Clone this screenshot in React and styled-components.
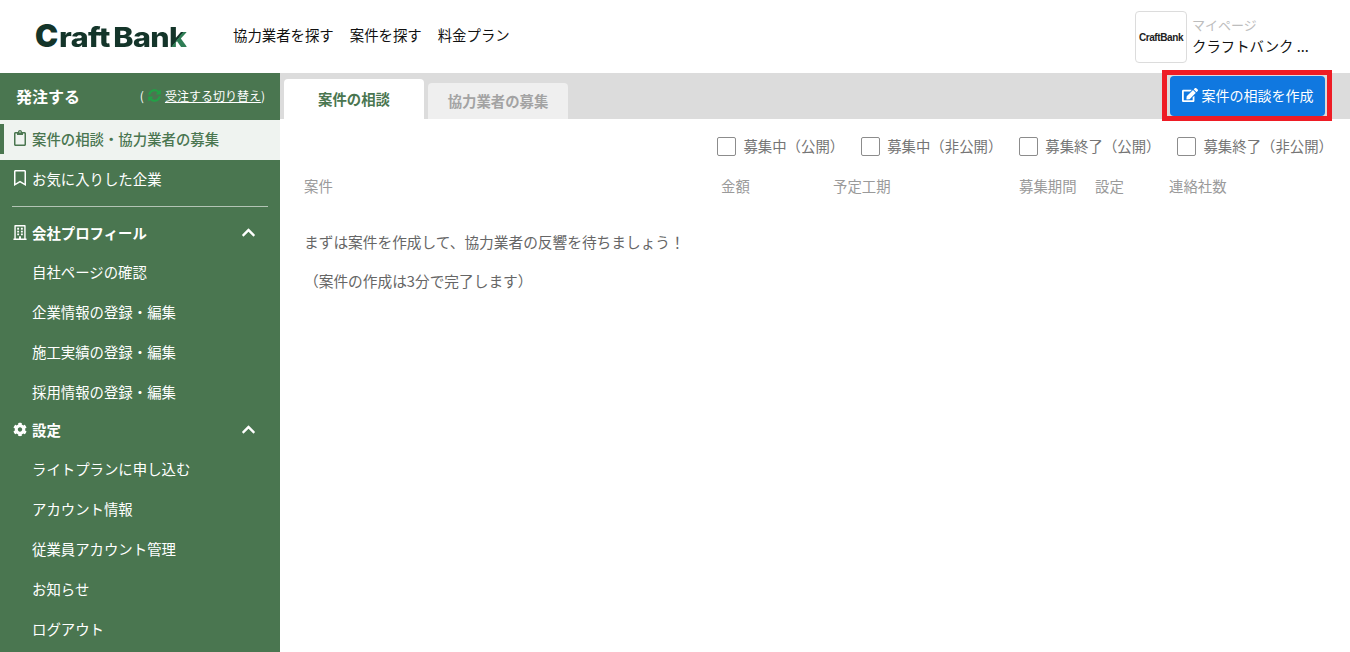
import React from "react";
import styled, { createGlobalStyle } from "styled-components";
import {
  FaEdit,
  FaRegClipboard,
  FaRegBookmark,
  FaRegBuilding,
  FaCog,
  FaChevronUp,
  FaSyncAlt,
} from "react-icons/fa";

const Global = createGlobalStyle`
  html, body { margin: 0; padding: 0; height: 100%; background: #fff; overflow: hidden; }
  * { box-sizing: border-box; }
  body { font-family: "Noto Sans CJK JP", "Noto Sans", sans-serif; font-size: 14.4px; color: #333; }
`;

const Page = styled.div`
  width: 1350px;
  height: 652px;
  display: flex;
  flex-direction: column;
  overflow: hidden;
`;

const Header = styled.header`
  height: 72px;
  flex: none;
  display: flex;
  align-items: center;
  padding: 0 41px 0 35px;
  background: #fff;
`;

const LogoMark = styled.div`
  display: flex;
  align-items: baseline;
  width: 150px;
  height: 30px;
  font-family: "Inter", "Liberation Sans", sans-serif;
  font-weight: 800;
  font-size: 27px;
  letter-spacing: -0.5px;
  color: #14352a;
  line-height: 30px;
  white-space: nowrap;
`;

const LogoInitial = styled.span`
  font-size: 31px;
  font-weight: 900;
  margin-right: 1px;
`;

const LogoWord = styled.span`
  display: inline-block;
  transform: scaleX(1.13);
  transform-origin: left center;
`;

const LogoSecond = styled.span`
  margin-left: 3px;
`;

const LogoTail = styled.span`
  background: linear-gradient(125deg, #14352a 52%, #2f7d55 53%);
  -webkit-background-clip: text;
  background-clip: text;
  color: transparent;
`;

const Nav = styled.nav`
  display: flex;
  gap: 16px;
  margin-left: 48px;
  padding-bottom: 2px;
`;

const NavLink = styled.a`
  font-size: 14.4px;
  color: #111;
  line-height: 20px;
  white-space: nowrap;
`;

const Account = styled.div`
  margin-left: auto;
  display: flex;
  align-items: center;
  gap: 5px;
  width: 174px;
`;

const Avatar = styled.div`
  width: 52px;
  height: 52px;
  flex: none;
  margin-top: 2px;
  border: 1px solid #dcdcdc;
  border-radius: 4px;
  display: flex;
  align-items: center;
  justify-content: center;
  font-family: "Liberation Sans", sans-serif;
  font-size: 10px;
  font-weight: 700;
  letter-spacing: -0.4px;
  color: #222;
`;

const AccountText = styled.div`
  display: flex;
  flex-direction: column;
`;

const MyPage = styled.span`
  font-size: 13px;
  line-height: 20px;
  color: #bdbdbd;
`;

const Company = styled.span`
  font-size: 14.4px;
  line-height: 22px;
  color: #111;
  white-space: nowrap;
`;

const Body = styled.div`
  flex: 1;
  display: flex;
  min-height: 0;
`;

const Sidebar = styled.aside`
  width: 280px;
  flex: none;
  margin-top: 1px;
  background: #4a7650;
  color: #fff;
`;

const SideTop = styled.div`
  height: 47px;
  display: flex;
  align-items: center;
  justify-content: space-between;
  padding: 0 15px 2px 16px;
`;

const SideTitle = styled.div`
  font-size: 16px;
  font-weight: 700;
`;

const Switch = styled.div`
  display: flex;
  align-items: center;
  gap: 4px;
  font-size: 12px;
  white-space: nowrap;
`;

const SwitchLabel = styled.span`
  display: inline;
`;

const SwitchLink = styled.a`
  text-decoration: underline;
`;

const SwitchIcon = styled(FaSyncAlt)`
  color: #23a047;
  font-size: 13px;
`;

const SideItem = styled.div`
  height: 40px;
  display: flex;
  align-items: center;
  gap: 5px;
  padding: 0 0 4px 13px;
  font-size: 14.4px;
  position: relative;
  white-space: nowrap;
  background: ${(p) => (p.$active ? "#eff3f0" : "transparent")};
  color: ${(p) => (p.$active ? "#4a7650" : "#fff")};
  font-weight: ${(p) => (p.$active ? 500 : 400)};
  ${(p) =>
    p.$active &&
    `&::before { content: ""; position: absolute; left: 0; top: 4px; bottom: 6px; width: 4px; background: #4a7650; }`}
`;

const SideIcon = styled.span`
  display: flex;
  width: 14px;
  justify-content: center;
  font-size: 16px;
`;

const Divider = styled.hr`
  margin: 6px 12px 6px;
  border: 0;
  border-top: 1px solid #b3c4b5;
`;

const Section = styled.div`
  height: ${(p) => p.$h || 40}px;
  margin-bottom: ${(p) => p.$after || 0}px;
  display: flex;
  align-items: center;
  gap: 5px;
  padding: 0 24px 2px 13px;
  font-size: 14.4px;
  font-weight: 700;
`;

const SectionLabel = styled.span`
  flex: 1;
`;

const SectionIcon = styled.span`
  display: flex;
  width: 14px;
  justify-content: center;
  font-size: 15px;
`;

const Toggle = styled(FaChevronUp)`
  font-size: 15px;
  color: #fff;
`;

const SubItem = styled.div`
  height: 40px;
  display: flex;
  align-items: center;
  padding: 0 0 4px 32px;
  font-size: 14.4px;
  white-space: nowrap;
`;

const Main = styled.main`
  flex: 1;
  min-width: 0;
  display: flex;
  flex-direction: column;
`;

const TabBar = styled.div`
  height: 46px;
  margin-top: 1px;
  flex: none;
  background: #dcdcdc;
  display: flex;
  align-items: flex-end;
  padding: 0 25px 0 4px;
  gap: 4px;
`;

const Tab = styled.div`
  width: 140px;
  height: ${(p) => (p.$active ? 40 : 36)}px;
  padding-bottom: 2px;
  border-radius: 4px 4px 0 0;
  background: ${(p) => (p.$active ? "#fff" : "#efefef")};
  color: ${(p) => (p.$active ? "#4a7650" : "#a3a3a3")};
  font-size: 14.4px;
  font-weight: 700;
  display: flex;
  align-items: center;
  justify-content: center;
`;

const CreateWrap = styled.div`
  margin-left: auto;
  align-self: center;
  position: relative;
`;

const CreateButton = styled.button`
  width: 155px;
  height: 40px;
  border: 0;
  padding: 0 0 2px;
  border-radius: 4px;
  background: #1078e0;
  color: #fff;
  font: inherit;
  font-size: 14px;
  display: flex;
  align-items: center;
  justify-content: center;
  gap: 4px;
  white-space: nowrap;
`;

const EditIcon = styled(FaEdit)`
  font-size: 16px;
`;

const Highlight = styled.div`
  position: absolute;
  left: -8px;
  right: -7px;
  top: -6px;
  bottom: -5px;
  border: 5px solid #ee1c25;
  pointer-events: none;
`;

const Filters = styled.div`
  height: 54px;
  flex: none;
  display: flex;
  justify-content: flex-end;
  align-items: center;
  gap: 17px;
  padding: 0 17px 0 0;
`;

const Filter = styled.label`
  display: flex;
  align-items: center;
  gap: 7px;
  font-size: 14.4px;
  color: #757575;
  white-space: nowrap;
`;

const FilterText = styled.span`
  margin-top: -2px;
`;

const Box = styled.span`
  width: 19px;
  height: 19px;
  flex: none;
  border: 1px solid #8c8c8c;
  border-radius: 2px;
  background: #fff;
`;

const Columns = styled.div`
  display: grid;
  grid-template-columns: 417px 113px 185px 76px 75px 1fr;
  padding: 0 0 4px 24px;
  height: 28px;
  align-items: center;
  font-size: 14.4px;
  color: #9a9a9a;
`;

const ColumnName = styled.span`
  margin-left: ${(p) => p.$nudge || 0}px;
`;

const Message = styled.p`
  margin: ${(p) => p.$top}px 0 0 24px;
  font-size: 14.7px;
  line-height: 20px;
  color: #666;
`;

const profile = ["自社ページの確認", "企業情報の登録・編集", "施工実績の登録・編集", "採用情報の登録・編集"];
const settings = ["ライトプランに申し込む", "アカウント情報", "従業員アカウント管理", "お知らせ", "ログアウト"];
const filters = ["募集中（公開）", "募集中（非公開）", "募集終了（公開）", "募集終了（非公開）"];
const columns = [
  ["案件", 0],
  ["金額", 0],
  ["予定工期", -1],
  ["募集期間", 0],
  ["設定", 0],
  ["連絡社数", -1],
];

export default function App() {
  return (
    <Page>
      <Global />
      <Header>
        <LogoMark>
          <LogoInitial>C</LogoInitial>
          <LogoWord>
            raft
            <LogoSecond>Ban</LogoSecond>
            <LogoTail>k</LogoTail>
          </LogoWord>
        </LogoMark>
        <Nav>
          <NavLink>協力業者を探す</NavLink>
          <NavLink>案件を探す</NavLink>
          <NavLink>料金プラン</NavLink>
        </Nav>
        <Account>
          <Avatar>CraftBank</Avatar>
          <AccountText>
            <MyPage>マイページ</MyPage>
            <Company>クラフトバンク ...</Company>
          </AccountText>
        </Account>
      </Header>
      <Body>
        <Sidebar>
          <SideTop>
            <SideTitle>発注する</SideTitle>
            <Switch>
              <span>(</span>
              <SwitchIcon />
              <SwitchLabel>
                <SwitchLink>受注する切り替え</SwitchLink>)
              </SwitchLabel>
            </Switch>
          </SideTop>
          <SideItem $active>
            <SideIcon>
              <FaRegClipboard />
            </SideIcon>
            案件の相談・協力業者の募集
          </SideItem>
          <SideItem>
            <SideIcon>
              <FaRegBookmark />
            </SideIcon>
            お気に入りした企業
          </SideItem>
          <Divider />
          <Section>
            <SectionIcon>
              <FaRegBuilding />
            </SectionIcon>
            <SectionLabel>会社プロフィール</SectionLabel>
            <Toggle />
          </Section>
          {profile.map((t) => (
            <SubItem key={t}>{t}</SubItem>
          ))}
          <Section $h={34} $after={3}>
            <SectionIcon>
              <FaCog />
            </SectionIcon>
            <SectionLabel>設定</SectionLabel>
            <Toggle />
          </Section>
          {settings.map((t) => (
            <SubItem key={t}>{t}</SubItem>
          ))}
        </Sidebar>
        <Main>
          <TabBar>
            <Tab $active>案件の相談</Tab>
            <Tab>協力業者の募集</Tab>
            <CreateWrap>
              <CreateButton>
                <EditIcon />
                案件の相談を作成
              </CreateButton>
              <Highlight />
            </CreateWrap>
          </TabBar>
          <Filters>
            {filters.map((t) => (
              <Filter key={t}>
                <Box />
                <FilterText>{t}</FilterText>
              </Filter>
            ))}
          </Filters>
          <Columns>
            {columns.map(([t, nudge]) => (
              <ColumnName key={t} $nudge={nudge}>
                {t}
              </ColumnName>
            ))}
          </Columns>
          <Message $top={31}>まずは案件を作成して、協力業者の反響を待ちましょう！</Message>
          <Message $top={19}>（案件の作成は3分で完了します）</Message>
        </Main>
      </Body>
    </Page>
  );
}
